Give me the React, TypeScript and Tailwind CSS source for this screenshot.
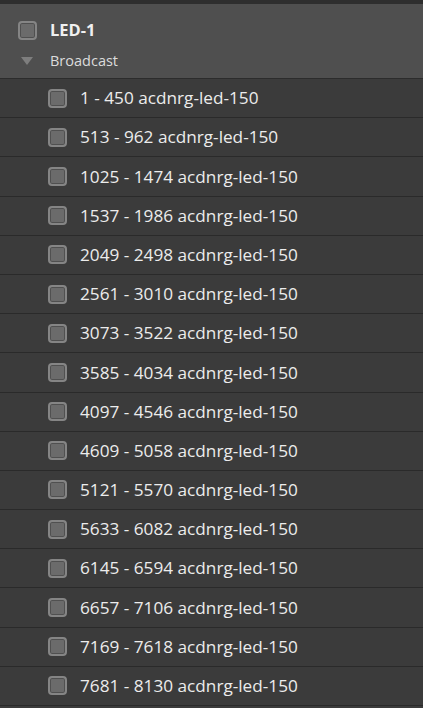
import React from "react";

const rows = [
  "1 - 450",
  "513 - 962",
  "1025 - 1474",
  "1537 - 1986",
  "2049 - 2498",
  "2561 - 3010",
  "3073 - 3522",
  "3585 - 4034",
  "4097 - 4546",
  "4609 - 5058",
  "5121 - 5570",
  "5633 - 6082",
  "6145 - 6594",
  "6657 - 7106",
  "7169 - 7618",
  "7681 - 8130",
];

function Box() {
  return (
    <div className="w-[19px] h-[19px] rounded-[4px] border-2 border-[#858585] bg-[#6b6b6b] shadow-[inset_0_0_0_1px_#505050] shrink-0" />
  );
}

export default function App() {
  return (
    <div
      className="w-[423px] h-[708px] overflow-hidden bg-[#3b3b3b] flex flex-col"
      style={{ fontFamily: '"Open Sans", "Liberation Sans", sans-serif' }}
    >
      <div className="h-[4px] bg-[#2e2e2e] shrink-0" />
      <div className="h-[75px] bg-[#4f4f4f] shrink-0 flex flex-col border-b border-[#2c2c2c]">
        <div className="flex items-center h-[52px] pl-[18px] pt-[1px]">
          <Box />
          <span className="ml-[13px] text-[16.5px] font-bold text-[#f0f0f0]">LED-1</span>
        </div>
        <div className="flex items-center pl-[21px] -mt-[6px]">
          <svg width="12" height="8" viewBox="0 0 12 8">
            <polygon points="0,0 12,0 6,8" fill="#7e7e7e" />
          </svg>
          <span className="ml-[17px] text-[14.5px] text-[#dcdcdc]">Broadcast</span>
        </div>
      </div>
      {rows.map((r) => (
        <div
          key={r}
          className="h-[39.2px] shrink-0 flex items-center pl-[48px] border-b border-[#2a2a2a]"
        >
          <Box />
          <span className="ml-[13px] text-[17.2px] text-[#ececec] whitespace-nowrap">
            {r} acdnrg-led-150
          </span>
        </div>
      ))}
    </div>
  );
}
